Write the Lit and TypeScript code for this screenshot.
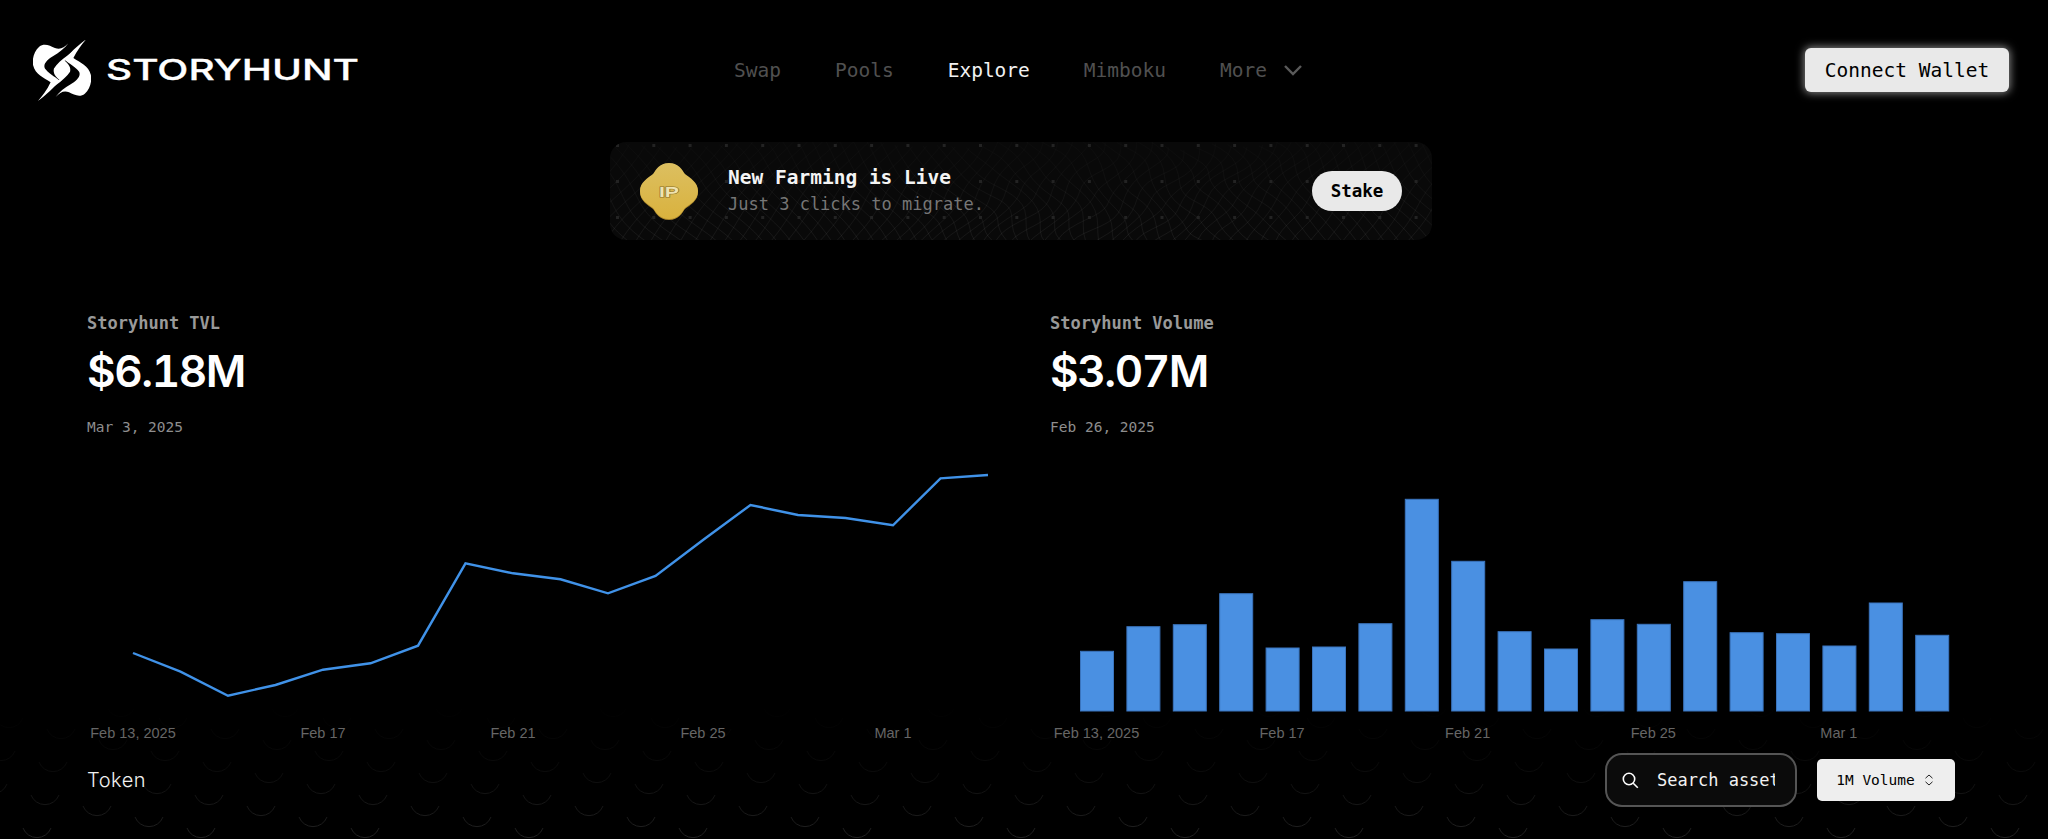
import { LitElement, html, css, svg } from "lit";
import { customElement } from "lit/decorators.js";

const LINE_Y = [653, 671.7, 695.7, 685, 669.7, 663.3, 645.7, 563.3, 573.3, 579.3, 593.3, 576, 540, 505, 515, 518, 525.3, 478.3, 475];
const BAR_TOP = [651.3, 626.7, 624.7, 593.7, 648, 647, 623.7, 499.3, 561.3, 631.7, 649, 619.7, 624.3, 581.7, 632.7, 633.7, 646, 603, 635.3];
const TICKS = ["Feb 13, 2025", "Feb 17", "Feb 21", "Feb 25", "Mar 1"];
const CHART_TOP = 450;

function scallops() {
  const arcs: string[] = [];
  for (let i = -10; i < 60; i++) {
    for (let j = -40; j < 40; j++) {
      const x = 25 + i * 52 - j * 8;
      const y = 658 + i * 11 + j * 33;
      if (y < 690 || y > 850 || x < -20 || x > 2070) continue;
      arcs.push(`M${x - 14} ${y - 6}A15 15 0 0 0 ${x + 14} ${y - 6}`);
    }
  }
  return arcs.join("");
}

function mesh() {
  let d = "";
  const warp = (u: number, v: number) => {
    const s = Math.exp(-Math.pow((u - 520) / 190, 2));
    return [
      u + 5 * Math.sin(v / 17 + u / 90) + 6 * s * Math.sin(v / 9),
      v + 5 * Math.sin(u / 42 + v / 60) + 4 * s * Math.sin(u / 11),
    ];
  };
  for (let k = -120; k < 1000; k += 15) {
    const a: string[] = [];
    const b: string[] = [];
    for (let t = 0; t <= 110; t += 5) {
      const p = warp(k + t * 0.85, t);
      const q = warp(k + 110 * 0.85 - t * 0.85, t);
      a.push(`${p[0].toFixed(1)} ${p[1].toFixed(1)}`);
      b.push(`${q[0].toFixed(1)} ${q[1].toFixed(1)}`);
    }
    d += `M${a.join("L")}M${b.join("L")}`;
  }
  return d;
}

function dots() {
  const out = [];
  for (let x = 6; x < 822; x += 36.3) {
    for (const y of [2, 38, 74]) out.push(svg`<rect x=${x} y=${y} width="3" height="3" fill="#232323"></rect>`);
  }
  return out;
}

@customElement("app-root")
export class AppRoot extends LitElement {
  static styles = css`
    :host {
      display: block;
      position: relative;
      height: 100vh;
      overflow: hidden;
      background: #000;
      color: #fff;
      font-family: "DejaVu Sans Mono", monospace;
    }
    .bg {
      position: absolute;
      left: 0;
      top: 0;
      width: 2048px;
      height: 839px;
      -webkit-mask-image: linear-gradient(to bottom, transparent 705px, rgba(0,0,0,.3) 770px, #000 839px);
      mask-image: linear-gradient(to bottom, transparent 705px, rgba(0,0,0,.3) 770px, #000 839px);
    }
    .page {
      position: relative;
    }
    header {
      display: grid;
      grid-template-columns: 1fr auto 1fr;
      align-items: center;
      height: 140px;
      padding: 0 39px 0 33px;
    }
    .logo {
      display: flex;
      align-items: center;
      gap: 16px;
    }
    .wordmark {
      display: block;
      overflow: visible;
    }
    .wordmark text {
      font-family: "Inter", sans-serif;
      font-weight: 500;
      font-size: 28px;
      fill: #fff;
      stroke: #fff;
      stroke-width: 0.3;
    }
    nav {
      display: flex;
      align-items: center;
      gap: 54px;
      margin-right: 6px;
      font-size: 19.5px;
      color: #505050;
    }
    nav .active {
      color: #f2f2f2;
    }
    .more {
      display: flex;
      align-items: center;
      gap: 17px;
    }
    .wallet {
      justify-self: end;
      width: 204px;
      height: 44px;
      border: 0;
      border-radius: 6px;
      padding: 0;
      background: #e9e9e9;
      color: #000;
      font: 19.5px "DejaVu Sans Mono", monospace;
      box-shadow: 0 0 8px 1px rgba(255, 255, 255, 0.55);
    }
    .banner-wrap {
      display: flex;
      justify-content: center;
      padding: 2px 6px 0 0;
    }
    .banner {
      position: relative;
      box-sizing: border-box;
      display: flex;
      align-items: center;
      width: 822px;
      height: 98px;
      padding: 0 30px 0 30px;
      border-radius: 16px;
      background: #090909;
      overflow: hidden;
    }
    .mesh {
      position: absolute;
      inset: 0;
      width: 822px;
      height: 98px;
    }
    .coin {
      position: relative;
      flex: none;
      display: block;
    }
    .coin text {
      font-family: "Liberation Sans", sans-serif;
      font-weight: 700;
      font-size: 15px;
      paint-order: stroke;
    }
    .banner-copy {
      position: relative;
      margin-left: 30px;
      flex: 1;
    }
    .banner-title {
      font-size: 19.5px;
      font-weight: 700;
      line-height: 26px;
      color: #f4f4f4;
    }
    .banner-sub {
      font-size: 17px;
      line-height: 26px;
      color: #767676;
    }
    .stake {
      position: relative;
      width: 90px;
      height: 40px;
      border: 0;
      padding: 0;
      border-radius: 20px;
      background: #e9e9e9;
      color: #000;
      font: 700 17.5px "DejaVu Sans Mono", monospace;
    }
    .charts {
      display: grid;
      grid-template-columns: 911px 911px;
      column-gap: 52px;
      padding: 73px 87px 0;
    }
    .stat-label {
      font-size: 17px;
      font-weight: 700;
      line-height: 20px;
      color: #999;
    }
    .stat-value {
      margin-top: 12px;
      font-family: "Inter", sans-serif;
      font-weight: 600;
      font-size: 44px;
      line-height: 52px;
      letter-spacing: -1.4px;
      font-variant-numeric: tabular-nums;
      color: #fff;
    }
    .stat-date {
      margin-top: 21px;
      font-size: 14.5px;
      line-height: 18px;
      color: #8e8e8e;
    }
    .chart {
      display: block;
      margin-top: 14px;
    }
    .chart text {
      font-family: "Liberation Sans", sans-serif;
      font-size: 14.5px;
      fill: #666;
      text-anchor: middle;
    }
    .toolbar {
      display: flex;
      align-items: center;
      margin-top: 8px;
      padding: 0 93px 0 87px;
    }
    .token {
      flex: 1;
      font-family: "Inter", sans-serif;
      font-weight: 300;
      font-size: 20px;
      letter-spacing: 0.5px;
      color: #f0f0f0;
    }
    .search {
      box-sizing: border-box;
      display: flex;
      align-items: center;
      gap: 18px;
      width: 192px;
      height: 54px;
      padding: 0 20px 0 15px;
      border: 2px solid #555;
      border-radius: 17px;
      background: #0b0b0b;
    }
    .search svg {
      flex: none;
    }
    .search input {
      flex: 1;
      min-width: 0;
      padding: 0;
      border: 0;
      outline: 0;
      background: transparent;
      color: #fff;
      font: 17px "DejaVu Sans Mono", monospace;
    }
    .search input::placeholder {
      color: #f2f2f2;
      opacity: 1;
    }
    .select {
      display: flex;
      align-items: center;
      justify-content: center;
      gap: 9px;
      width: 138px;
      height: 42px;
      margin-left: 20px;
      padding: 0 2px 0 0;
      border: 0;
      border-radius: 5px;
      background: #eee;
      color: #000;
      font: 14.5px "DejaVu Sans Mono", monospace;
    }
  `;

  private line() {
    const step = (988 - 133) / 18;
    const pts = LINE_Y.map((y, i) => `${46 + i * step},${y - CHART_TOP}`).join(" ");
    return html`<svg class="chart" width="911" height="295">
      <polyline points=${pts} fill="none" stroke="#4092e8" stroke-width="2.4"></polyline>
      ${TICKS.map((t, i) => svg`<text x=${46 + i * 4 * step} y=${288}>${t}</text>`)}
    </svg>`;
  }

  private bars() {
    const step = 46.4;
    return html`<svg class="chart" width="911" height="295">
      ${BAR_TOP.map(
        (top, i) => svg`<rect x=${30.5 + i * step} y=${top - CHART_TOP} width="33" height=${711 - top}
          fill="#4a90e2" stroke="#3a74bd" stroke-width="1"></rect>`
      )}
      ${TICKS.map((t, i) => svg`<text x=${46.5 + i * 4 * step} y=${288}>${t}</text>`)}
    </svg>`;
  }

  render() {
    const lobe =
      "M205 70C192 84 180 90 165 84C150 76 132 68 118 80C102 94 96 118 100 136C106 162 132 172 152 186C142 208 126 228 114 242C138 224 165 200 178 180C165 170 144 158 135 145C128 132 145 116 160 108C178 98 195 84 205 70Z";
    const spindle =
      "M256 60C225 95 178 118 162 145C158 158 168 172 178 178L116 240C147 205 194 182 210 155C214 142 204 130 194 122Z";
    const coin =
      "M0-28C10-28 13-21 16-17C21-13 29-9 29 0C29 9 21 13 16 17C13 21 10 28 0 28C-10 28-13 21-16 17C-21 13-29 9-29 0C-29-9-21-13-16-17C-13-21-10-28 0-28Z";
    return html`
      <svg class="bg" viewBox="0 0 2048 839">
        <path d=${scallops()} fill="none" stroke="#232323" stroke-width="1"></path>
      </svg>
      <div class="page">
        <header>
          <div class="logo">
            <svg width="58" height="61" viewBox="100 60 172 182">
              <path d=${spindle} fill="#fff"></path>
              <path d=${lobe} fill="#fff"></path>
              <path d=${lobe} fill="#fff" transform="rotate(180 186 150)"></path>
            </svg>
            <svg class="wordmark" width="252" height="28" viewBox="0 0 252 28">
              <text x="-1" y="24" textLength="253" lengthAdjust="spacingAndGlyphs">STORYHUNT</text>
            </svg>
          </div>
          <nav>
            <span>Swap</span>
            <span>Pools</span>
            <span class="active">Explore</span>
            <span>Mimboku</span>
            <span class="more">More
              <svg width="18" height="11" viewBox="0 0 18 11">
                <path d="M1 1l8 8 8-8" fill="none" stroke="#5a5a5a" stroke-width="2.4"></path>
              </svg>
            </span>
          </nav>
          <button class="wallet">Connect Wallet</button>
        </header>

        <div class="banner-wrap">
          <div class="banner">
            <svg class="mesh" viewBox="0 0 822 98">
              <defs>
                <linearGradient id="meshfade" x1="0" y1="0" x2="0" y2="1">
                  <stop offset="0" stop-color="#fff" stop-opacity="0.01"></stop>
                  <stop offset="1" stop-color="#fff" stop-opacity="0.1"></stop>
                </linearGradient>
              </defs>
              <path d=${mesh()} fill="none" stroke="url(#meshfade)" stroke-width="0.7"></path>
              ${dots()}
            </svg>
            <svg class="coin" width="58" height="58" viewBox="-29 -29 58 58">
              <defs>
                <linearGradient id="gold" x1="0" y1="0" x2="0" y2="1">
                  <stop offset="0" stop-color="#dcbf60"></stop>
                  <stop offset="1" stop-color="#d9b23e"></stop>
                </linearGradient>
              </defs>
              <path d=${coin} fill="#a8842a" transform="translate(0 1)"></path>
              <path d=${coin} fill="url(#gold)"></path>
              <text x="-10" y="5.5" fill="#efe3b0" stroke="#8a6d28" stroke-width="1.2" textLength="20" lengthAdjust="spacingAndGlyphs">IP</text>
            </svg>
            <div class="banner-copy">
              <div class="banner-title">New Farming is Live</div>
              <div class="banner-sub">Just 3 clicks to migrate.</div>
            </div>
            <button class="stake">Stake</button>
          </div>
        </div>

        <div class="charts">
          <section>
            <div class="stat-label">Storyhunt TVL</div>
            <div class="stat-value">$6.18M</div>
            <div class="stat-date">Mar 3, 2025</div>
            ${this.line()}
          </section>
          <section>
            <div class="stat-label">Storyhunt Volume</div>
            <div class="stat-value">$3.07M</div>
            <div class="stat-date">Feb 26, 2025</div>
            ${this.bars()}
          </section>
        </div>

        <div class="toolbar">
          <div class="token">Token</div>
          <label class="search">
            <svg width="17" height="17" viewBox="0 0 17 17">
              <circle cx="7" cy="7" r="5.7" fill="none" stroke="#fff" stroke-width="1.6"></circle>
              <path d="M11.2 11.2l4.6 4.6" stroke="#fff" stroke-width="1.6" fill="none"></path>
            </svg>
            <input placeholder="Search assets" />
          </label>
          <button class="select">
            1M Volume
            <svg width="10" height="12" viewBox="0 0 10 12">
              <path d="M1.5 4.2L5 1l3.5 3.2M1.5 7.8L5 11l3.5-3.2" fill="none" stroke="#222" stroke-width="1"></path>
            </svg>
          </button>
        </div>
      </div>
    `;
  }
}
